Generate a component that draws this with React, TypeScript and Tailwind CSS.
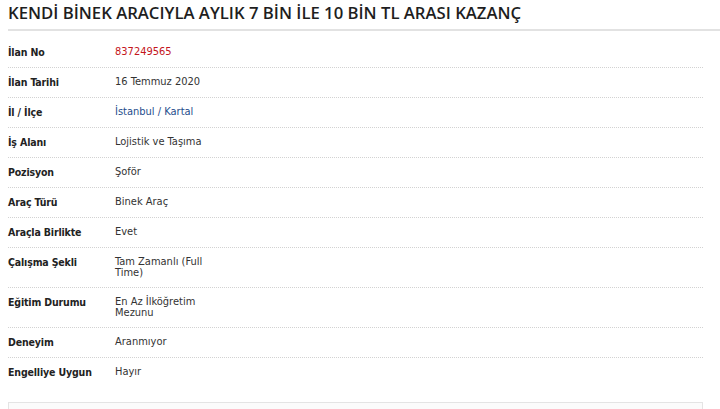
const rows: { label: string; value: string; tone?: "red" | "blue" }[] = [
  { label: "İlan No", value: "837249565", tone: "red" },
  { label: "İlan Tarihi", value: "16 Temmuz 2020" },
  { label: "İl / İlçe", value: "İstanbul / Kartal", tone: "blue" },
  { label: "İş Alanı", value: "Lojistik ve Taşıma" },
  { label: "Pozisyon", value: "Şoför" },
  { label: "Araç Türü", value: "Binek Araç" },
  { label: "Araçla Birlikte", value: "Evet" },
  { label: "Çalışma Şekli", value: "Tam Zamanlı (Full Time)" },
  { label: "Eğitim Durumu", value: "En Az İlköğretim Mezunu" },
  { label: "Deneyim", value: "Aranmıyor" },
  { label: "Engelliye Uygun", value: "Hayır" },
];

export default function App() {
  return (
    <div className="w-[720px] h-[409px] overflow-hidden bg-white pl-2">
      {/* Başlık */}
      <h1 className="pt-[2px] pb-[6px] border-b-2 border-[#e2e2e2] font-['Open_Sans',sans-serif] text-[16.7px] leading-[21px] font-semibold text-[#1e1e1e]">
        KENDİ BİNEK ARACIYLA AYLIK 7 BİN İLE 10 BİN TL ARASI KAZANÇ
      </h1>

      {/* İlan detayları */}
      <ul className="mt-[7px] mr-[17px] font-['DejaVu_Sans_Condensed','DejaVu_Sans',sans-serif] [font-stretch:condensed] text-[11px] leading-[11px] text-[#333]">
        {rows.map((r, i) => (
          <li
            key={r.label}
            className={
              i === rows.length - 1
                ? "flex pt-[9px] pb-[9px]"
                : "flex pt-[9px] pb-[9px] border-b border-dotted border-[#d2d2d2]"
            }
          >
            <span className="w-[107px] shrink-0 font-bold text-[10.5px] leading-[11px] tracking-[-0.15px] text-[#222]">
              {r.label}
            </span>
            <span
              className={
                r.tone === "red"
                  ? "w-[110px] leading-[10.5px] text-[#c4161c]"
                  : r.tone === "blue"
                  ? "w-[110px] leading-[10.5px] text-[#1f4e8c]"
                  : "w-[110px] leading-[10.5px]"
              }
            >
              {r.value}
            </span>
          </li>
        ))}
      </ul>

      <div className="mt-[15px] mr-[17px] h-[30px] border border-[#e4e4e4] bg-[#fbfbfb]" />
    </div>
  );
}
